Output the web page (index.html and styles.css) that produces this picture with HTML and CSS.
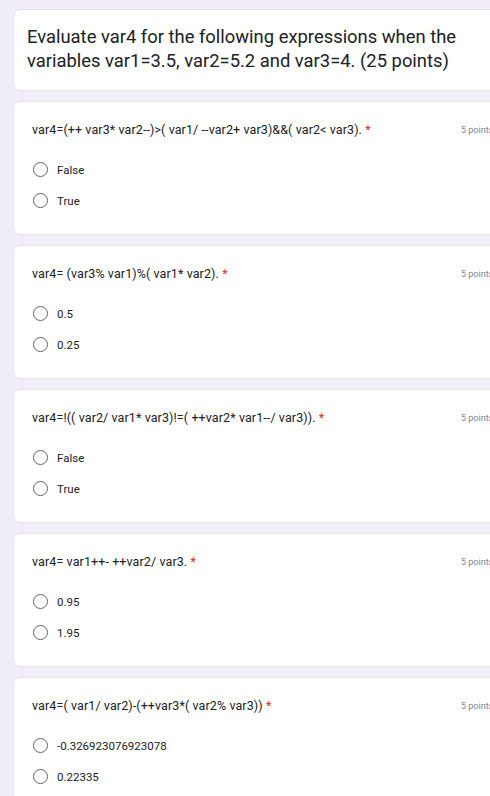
FILE: index.html
```html
<!DOCTYPE html>
<html>
<head>
<meta charset="utf-8">
<link rel="stylesheet" href="styles.css">
</head>
<body>
<div class="page">
  <div class="card title-card">
    <div class="title">Evaluate var4 for the following expressions when the variables var1=3.5, var2=5.2 and var3=4. (25 points)</div>
  </div>

  <div class="card q-card">
    <div class="q-head">
      <div class="q-text">var4=(++ var3* var2--)&gt;( var1/ --var2+ var3)&amp;&amp;( var2&lt; var3). <span class="req">*</span></div>
      <div class="pts">5 points</div>
    </div>
    <div class="options">
      <div class="opt"><span class="radio"></span><span class="opt-label">False</span></div>
      <div class="opt"><span class="radio"></span><span class="opt-label">True</span></div>
    </div>
  </div>

  <div class="card q-card">
    <div class="q-head">
      <div class="q-text">var4= (var3% var1)%( var1* var2). <span class="req">*</span></div>
      <div class="pts">5 points</div>
    </div>
    <div class="options">
      <div class="opt"><span class="radio"></span><span class="opt-label">0.5</span></div>
      <div class="opt"><span class="radio"></span><span class="opt-label">0.25</span></div>
    </div>
  </div>

  <div class="card q-card">
    <div class="q-head">
      <div class="q-text">var4=!(( var2/ var1* var3)!=( ++var2* var1--/ var3)). <span class="req">*</span></div>
      <div class="pts">5 points</div>
    </div>
    <div class="options">
      <div class="opt"><span class="radio"></span><span class="opt-label">False</span></div>
      <div class="opt"><span class="radio"></span><span class="opt-label">True</span></div>
    </div>
  </div>

  <div class="card q-card">
    <div class="q-head">
      <div class="q-text">var4= var1++- ++var2/ var3. <span class="req">*</span></div>
      <div class="pts">5 points</div>
    </div>
    <div class="options">
      <div class="opt"><span class="radio"></span><span class="opt-label">0.95</span></div>
      <div class="opt"><span class="radio"></span><span class="opt-label">1.95</span></div>
    </div>
  </div>

  <div class="card q-card">
    <div class="q-head">
      <div class="q-text">var4=( var1/ var2)-(++var3*( var2% var3)) <span class="req">*</span></div>
      <div class="pts">5 points</div>
    </div>
    <div class="options">
      <div class="opt"><span class="radio"></span><span class="opt-label">-0.326923076923078</span></div>
      <div class="opt"><span class="radio"></span><span class="opt-label">0.22335</span></div>
    </div>
  </div>
</div>
</body>
</html>
```

FILE: styles.css
```css
html, body {
  margin: 0;
  padding: 0;
  background: #f0ecf8;
  overflow: hidden;
}
body {
  width: 490px;
  height: 796px;
  font-family: Roboto, "Liberation Sans", Arial, sans-serif;
  color: #202124;
}
.page {
  display: flex;
  flex-direction: column;
  gap: 10px;
  padding: 9px 0 0 13px;
  width: 540px;
}
.card {
  background: #ffffff;
  border: 1px solid #e6e3ee;
  border-radius: 8px;
  box-sizing: border-box;
  width: 540px;
}
.title-card {
  height: 82px;
  padding: 15px 0 0 13px;
}
.title {
  width: 445px;
  font-size: 18.4px;
  line-height: 24px;
  color: #202124;
}
.q-card {
  height: 134px;
  padding: 20px 0 0 18px;
}
.q-head {
  display: grid;
  grid-template-columns: 429px auto;
  align-items: center;
}
.q-text {
  font-size: 12.5px;
  line-height: 16px;
  letter-spacing: 0.1px;
  color: #202124;
}
.req {
  color: #d93025;
}
.pts {
  font-size: 9px;
  color: #80868b;
  white-space: nowrap;
}
.options {
  display: flex;
  flex-direction: column;
  margin-top: 16px;
}
.opt {
  display: flex;
  align-items: center;
  height: 31px;
  gap: 9px;
}
.radio {
  width: 15px;
  height: 15px;
  border: 1.5px solid #5f6368;
  border-radius: 50%;
  box-sizing: border-box;
  margin-left: 1px;
  flex: none;
}
.opt-label {
  font-size: 11.5px;
  color: #202124;
}
```
